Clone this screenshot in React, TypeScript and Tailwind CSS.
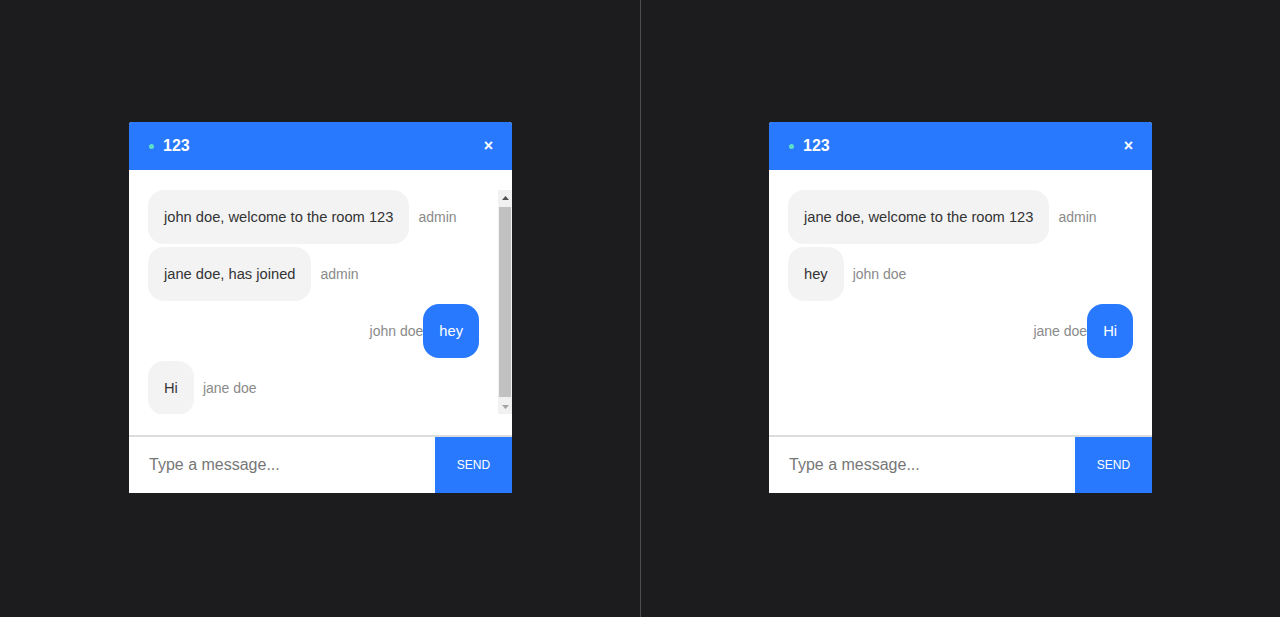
import { useState } from 'react';

type Msg = { text: string; user: string; own?: boolean };

const LEFT: Msg[] = [
  { text: 'john doe, welcome to the room 123', user: 'admin' },
  { text: 'jane doe, has joined', user: 'admin' },
  { text: 'hey', user: 'john doe', own: true },
  { text: 'Hi', user: 'jane doe' },
];

const RIGHT: Msg[] = [
  { text: 'jane doe, welcome to the room 123', user: 'admin' },
  { text: 'hey', user: 'john doe' },
  { text: 'Hi', user: 'jane doe', own: true },
];

function Message({ msg }: { msg: Msg }) {
  if (msg.own) {
    return (
      <div className="flex items-center justify-end mb-[3px]">
        <span className="text-[14px] text-[#8a8a8a]">{msg.user}</span>
        <div className="bg-[#2979ff] text-white rounded-2xl px-4 py-4 text-[14.7px] leading-[22px]">{msg.text}</div>
      </div>
    );
  }
  return (
    <div className="flex items-center mb-[3px]">
      <div className="bg-[#f3f3f3] text-[#333] rounded-2xl px-4 py-4 text-[14.7px] leading-[22px]">{msg.text}</div>
      <span className="ml-[9px] text-[14px] text-[#8a8a8a]">{msg.user}</span>
    </div>
  );
}

// classic scrollbar look, drawn since the headless browser hides real ones
function ScrollBar() {
  return (
    <div className="w-[14px] shrink-0 bg-[#f1f1f1] flex flex-col items-center">
      <div className="h-[15px] flex items-center justify-center">
        <svg width="7" height="4" viewBox="0 0 7 4"><path d="M0 4 L3.5 0 L7 4 Z" fill="#505050" /></svg>
      </div>
      <div className="flex-1 w-full px-[1px] py-[2px]">
        <div className="h-full w-full bg-[#c1c1c1]" />
      </div>
      <div className="h-[15px] flex items-center justify-center">
        <svg width="7" height="4" viewBox="0 0 7 4"><path d="M0 0 L3.5 4 L7 0 Z" fill="#a3a3a3" /></svg>
      </div>
    </div>
  );
}

function ChatBox({ messages, scroll }: { messages: Msg[]; scroll?: boolean }) {
  const [value, setValue] = useState('');
  return (
    <div className="w-[383px] h-[371px] bg-white rounded-t-[3px] flex flex-col overflow-hidden">
      <div className="h-12 shrink-0 bg-[#2979ff] flex items-center justify-between pl-5 pr-[19px] text-white">
        <div className="flex items-center">
          <span className="w-[5px] h-[5px] rounded-full bg-[#5ee0c8] mr-[9px]" />
          <span className="font-bold text-[16px]">123</span>
        </div>
        <span className="font-bold text-[16px] leading-none">×</span>
      </div>
      <div className="flex-1 min-h-0 flex pt-5 pb-[21px]">
        <div className="flex-1 min-h-0 overflow-hidden px-[19px]">
          {messages.map((m, i) => (
            <Message key={i} msg={m} />
          ))}
        </div>
        {scroll && <ScrollBar />}
      </div>
      <div className="h-[58px] shrink-0 border-t-2 border-[#dcdcdc] flex">
        <input
          value={value}
          onChange={(e) => setValue(e.target.value)}
          placeholder="Type a message..."
          className="flex-1 min-w-0 pl-5 text-[16px] text-[#333] placeholder:text-[#777] outline-none bg-white"
        />
        <button className="w-[77px] bg-[#2979ff] text-white text-[12px] uppercase">Send</button>
      </div>
    </div>
  );
}

export default function App() {
  return (
    <div
      className="w-full h-[617px] bg-[#1c1c1f] flex"
      style={{ fontFamily: '"Liberation Sans", Arial, sans-serif' }}
    >
      <div className="w-[640px] pl-px pb-[2px] flex items-center justify-center">
        <ChatBox messages={LEFT} scroll />
      </div>
      <div className="w-px bg-[#4d4d4f]" />
      <div className="flex-1 pb-[2px] flex items-center justify-center">
        <ChatBox messages={RIGHT} />
      </div>
    </div>
  );
}
